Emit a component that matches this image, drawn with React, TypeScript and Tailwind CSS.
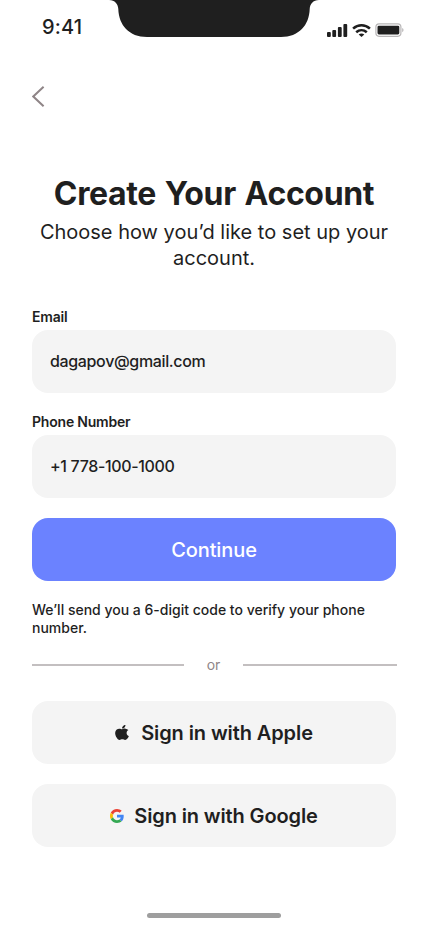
import React from "react";

function StatusBar() {
  return (
    <header className="relative flex h-[47px] shrink-0 justify-between">
      <span className="ml-[42px] mt-[13px] h-7 text-[20px] leading-7 font-medium tracking-[0.2px]">9:41</span>
      <svg className="absolute left-[109px] top-0" width="210" height="37" viewBox="0 0 210 37" fill="#1f1f1f">
        <path d="M0 0C6 0 9 4 9.300 9C9.800 25 20 37 38 37H172C190 37 200.200 25 200.700 9C201 4 204 0 210 0Z" />
      </svg>
      <div className="mr-6 mt-[23px] flex items-start">
        <svg width="21" height="14" viewBox="0 0 21 14" fill="#1f1f1f">
          <rect x="0" y="9" width="3.800" height="5" rx="1" />
          <rect x="5.300" y="7" width="3.800" height="7" rx="1" />
          <rect x="10.900" y="4" width="3.800" height="10" rx="1" />
          <rect x="16.400" y="1" width="3.800" height="13" rx="1" />
        </svg>
        <svg className="ml-1" width="19" height="14" viewBox="0 0 19 14" fill="none" stroke="#1f1f1f" strokeWidth="2.600">
          <path d="M1.100 5.600C6 1.200 13 1.200 17.900 5.600" />
          <path d="M4.200 9.200C7.300 6.500 11.700 6.500 14.800 9.200" />
          <path d="M9.500 14L6.700 11.500C8.200 10.200 10.800 10.200 12.300 11.500Z" fill="#1f1f1f" stroke="none" />
        </svg>
        <svg className="ml-1" width="29" height="14" viewBox="0 0 29 14">
          <rect x=".9" y=".9" width="25" height="12.400" rx="3.200" fill="none" stroke="#b8b6b7" strokeWidth="1.200" />
          <rect x="2.500" y="2.700" width="21.800" height="8.800" rx="1.400" fill="#1f1f1f" />
          <path d="M27.200 5C29 5.600 29 8.600 27.200 9.200Z" fill="#b8b6b7" />
        </svg>
      </div>
    </header>
  );
}

function Field({ label, children }: { label: string; children: React.ReactNode }) {
  return (
    <div className="flex h-[85px] flex-col">
      <span className="h-[22px] text-[14px] leading-[18px] font-semibold tracking-[-0.2px]">{label}</span>
      <div className="flex h-[63px] items-center rounded-2xl bg-[#f4f4f4] px-[18px] pb-[2px] text-[16px] font-medium">{children}</div>
    </div>
  );
}

function AppleLogo() {
  return (
    <svg className="mr-3" width="14" height="17" viewBox="0 0 384 512" preserveAspectRatio="none" fill="#1f1f1f">
      <path d="M318.700 268.700c-.2-36.700 16.400-64.400 50-84.800-18.800-26.900-47.200-41.700-84.700-44.600-35.500-2.800-74.300 20.700-88.500 20.700-15 0-49.400-19.700-76.400-19.700C63.300 141.200 4 184.800 4 273.500q0 39.300 14.400 81.200c12.800 36.700 59 126.700 107.200 125.200 25.200-.6 43-17.900 75.800-17.900 31.800 0 48.300 17.900 76.400 17.900 48.600-.7 90.400-82.500 102.600-119.300-65.200-30.700-61.700-90-61.700-91.900zm-56.600-164.200c27.300-32.400 24.800-61.900 24-72.500-24.100 1.400-52 16.400-67.900 34.900-17.500 19.800-27.800 44.300-25.600 71.900 26.100 2 49.900-11.400 69.500-34.300z" />
    </svg>
  );
}

function GoogleLogo() {
  return (
    <svg className="mr-[10px]" width="14" height="14" viewBox="0 0 48 48">
      <path fill="#ea4335" d="M24 9.500c3.540 0 6.710 1.220 9.210 3.600l6.850-6.850C35.900 2.380 30.470 0 24 0 14.620 0 6.510 5.380 2.560 13.220l7.980 6.190C12.430 13.720 17.740 9.500 24 9.500z" />
      <path fill="#4285f4" d="M46.980 24.550c0-1.570-.15-3.090-.38-4.550H24v9.020h12.940c-.58 2.960-2.260 5.480-4.780 7.180l7.730 6c4.510-4.180 7.090-10.360 7.090-17.650z" />
      <path fill="#fbbc05" d="M10.530 28.590c-.48-1.450-.76-2.990-.76-4.590s.27-3.140.76-4.590l-7.980-6.190C.92 16.460 0 20.120 0 24c0 3.880.92 7.540 2.560 10.780l7.970-6.190z" />
      <path fill="#34a853" d="M24 48c6.480 0 11.930-2.130 15.890-5.810l-7.730-6c-2.150 1.450-4.920 2.300-8.160 2.300-6.260 0-11.570-4.220-13.470-9.910l-7.980 6.190C6.510 42.620 14.620 48 24 48z" />
    </svg>
  );
}

export default function App() {
  return (
    <div className="flex h-[926px] w-[428px] flex-col overflow-hidden bg-white font-['Inter','Liberation_Sans',sans-serif] text-[#1f1f1f]">
      <StatusBar />
      <main className="flex flex-col px-8">
        <button className="mt-[39px] h-[21px] w-[13px]" aria-label="Back">
          <svg width="13" height="21" viewBox="0 0 13 21" fill="none" stroke="#8f8587" strokeWidth="2">
            <path d="M11.600 .8L1.300 10.500L11.600 20.200" />
          </svg>
        </button>
        <h1 className="mt-[67px] h-10 text-center text-[32px] leading-10 font-bold tracking-[-0.35px] [word-spacing:1.5px] whitespace-nowrap">Create Your Account</h1>
        <p className="mt-[5px] text-center text-[20px] leading-[26px] whitespace-nowrap">
          Choose how you’d like to set up your
          <br />
          account.
        </p>
        <form className="mt-[37px] flex flex-col gap-5">
          <Field label="Email"><span className="tracking-[-0.35px]">dagapov@gmail.com</span></Field>
          <Field label="Phone Number"><span className="tracking-[-0.35px]">+1 778-100-1000</span></Field>
          <button type="button" className="h-[63px] rounded-2xl bg-[#6b82ff] text-[20px] font-medium tracking-[-0.1px] text-white">Continue</button>
        </form>
        <p className="mt-5 h-9 text-[14px] leading-[18px] font-medium whitespace-nowrap">
          We’ll send you a 6-digit code to verify your phone
          <br />
          number.
        </p>
        <div className="-mr-px mt-[18px] flex h-5 items-center">
          <span className="h-[2px] w-[152px] bg-[#c3bfc0]" />
          <span className="w-[59px] text-center text-[14px] leading-5 text-[#8f8587]">or</span>
          <span className="h-[2px] w-[154px] bg-[#c3bfc0]" />
        </div>
        <div className="mt-[26px] flex flex-col gap-5 text-[20px] font-semibold">
          <button className="flex h-[63px] items-center justify-center rounded-2xl bg-[#f4f4f4]">
            <AppleLogo /><span className="tracking-[-0.1px]">Sign in with Apple</span>
          </button>
          <button className="flex h-[63px] items-center justify-center rounded-2xl bg-[#f4f4f4]">
            <GoogleLogo /><span className="tracking-[-0.13px]">Sign in with Google</span>
          </button>
        </div>
      </main>
      <div className="mx-auto mt-[66px] h-[5px] w-[134px] rounded-full bg-[#9e9e9e]" />
    </div>
  );
}
